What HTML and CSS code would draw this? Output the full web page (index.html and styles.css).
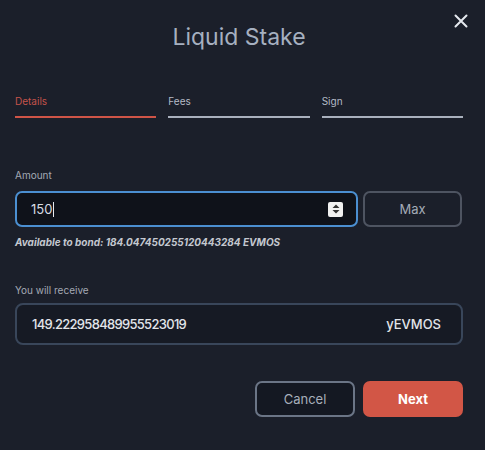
FILE: index.html
```html
<!DOCTYPE html>
<html lang="en">
<head>
    <meta charset="UTF-8">
    <meta name="viewport" content="width=device-width, initial-scale=1.0">
    <title>Liquid Stake</title>
    <link rel="stylesheet" href="styles.css">
</head>
<body>
    <div class="modal">
        <header class="modal-head">
            <h1>Liquid Stake</h1>
            <button class="close" aria-label="Close">
                <svg width="14" height="14" viewBox="0 0 14 14"><path d="M1.5 1.5 L12.5 12.5 M12.5 1.5 L1.5 12.5" stroke="#e6e9ef" stroke-width="2" stroke-linecap="round"/></svg>
            </button>
        </header>

        <nav class="steps">
            <div class="step active">Details</div>
            <div class="step">Fees</div>
            <div class="step">Sign</div>
        </nav>

        <section class="field">
            <label class="label">Amount</label>
            <div class="amount-row">
                <div class="amount-input">
                    <span class="value">150</span><span class="caret"></span>
                    <span class="spinner">
                        <svg width="10" height="12" viewBox="0 0 10 12"><path d="M5 1.5 L8.5 5 H1.5 Z M5 10.5 L8.5 7 H1.5 Z" fill="#333"/></svg>
                    </span>
                </div>
                <button class="btn btn-max">Max</button>
            </div>
            <p class="hint">Available to bond: 184.047450255120443284 EVMOS</p>
        </section>

        <section class="field receive">
            <label class="label">You will receive</label>
            <div class="receive-box">
                <span class="num">149.222958489955523019</span>
                <span>yEVMOS</span>
            </div>
        </section>

        <footer class="actions">
            <button class="btn btn-cancel">Cancel</button>
            <button class="btn btn-next">Next</button>
        </footer>
    </div>
</body>
</html>
```

FILE: styles.css
```css
body {
    margin: 0;
    background-color: #1b1f2a;
    font-family: Inter, "Noto Sans", sans-serif;
    color: #a9b2c2;
}

.modal {
    width: 448px;
    padding: 0 22px 0 15px;
}

.modal-head {
    position: relative;
    text-align: center;
    padding-top: 22px;
}

.modal-head h1 {
    margin: 0;
    font-size: 23px;
    font-weight: 400;
    line-height: 30px;
    color: #a6b0c0;
}

.close {
    position: absolute;
    top: 14px;
    right: -5px;
    background: none;
    border: none;
    padding: 0;
    cursor: pointer;
}

.steps {
    display: grid;
    grid-template-columns: 1fr 1fr 1fr;
    gap: 12px;
    margin-top: 42px;
}

.step {
    font-size: 10px;
    line-height: 14px;
    padding-bottom: 8px;
    color: #b4bbc7;
    border-bottom: 2px solid #a9b0bd;
}

.step.active {
    color: #c5534b;
    border-bottom-color: #cf5447;
}

.field {
    margin-top: 50px;
}

.label {
    display: block;
    font-size: 10px;
    line-height: 14px;
    color: #a3a9b4;
    margin-bottom: 9px;
}

.amount-row {
    display: flex;
    gap: 5px;
}

.amount-input {
    box-sizing: border-box;
    width: 343px;
    height: 36px;
    display: flex;
    align-items: center;
    padding: 0 12px 0 14px;
    background-color: #0f121a;
    border: 2px solid #4b8fd1;
    border-radius: 7px;
    font-size: 13px;
    color: #d8dce3;
}

.caret {
    width: 1px;
    height: 15px;
    margin-left: 1px;
    background-color: #e6e9ef;
}

.spinner {
    margin-left: auto;
    margin-right: 1px;
    width: 15px;
    height: 15px;
    display: flex;
    align-items: center;
    justify-content: center;
    background-color: #f1f1f1;
    border-radius: 2px;
}

.btn {
    box-sizing: border-box;
    height: 36px;
    border-radius: 7px;
    font-family: inherit;
    font-size: 13px;
    cursor: pointer;
}

.btn-max {
    width: 99px;
    background-color: #1b1f2a;
    border: 2px solid #4e5461;
    color: #a4abb7;
}

.hint {
    margin: 8px 0 0;
    font-size: 10px;
    line-height: 14px;
    font-style: italic;
    font-weight: 700;
    color: #c4c8d0;
}

.receive {
    margin-top: 34px;
}

.receive .label {
    margin-bottom: 6px;
}

.receive-box {
    box-sizing: border-box;
    height: 42px;
    display: flex;
    align-items: center;
    justify-content: space-between;
    padding: 0 20px 0 15px;
    background-color: #161a24;
    border: 2px solid #39465a;
    border-radius: 8px;
    font-size: 13px;
    font-weight: 500;
    color: #e2e5ea;
}

.receive-box .num {
    letter-spacing: -0.7px;
}

.actions {
    display: flex;
    justify-content: flex-end;
    gap: 8px;
    margin-top: 36px;
}

.btn-cancel {
    width: 100px;
    background-color: #141822;
    border: 2px solid #6b7586;
    color: #a7afbb;
}

.btn-next {
    width: 100px;
    background-color: #d25646;
    border: none;
    color: #fff;
    font-weight: 700;
}
```
